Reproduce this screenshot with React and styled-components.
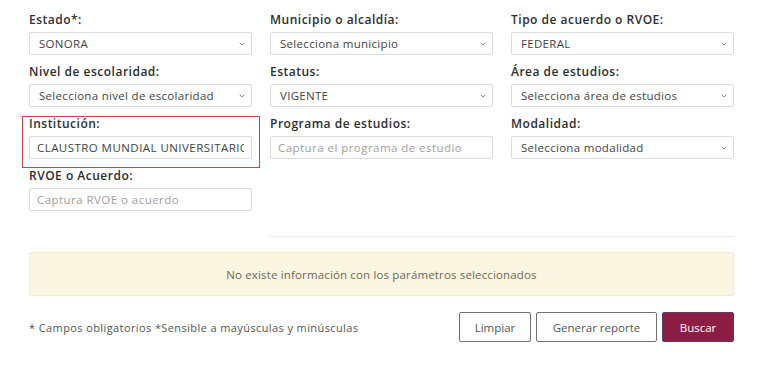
import React from 'react'
import styled, { createGlobalStyle } from 'styled-components'
import { ChevronDown } from 'lucide-react'

const GlobalStyle = createGlobalStyle`
  html, body {
    margin: 0;
    background: #fff;
    font-family: "Open Sans", "Liberation Sans", sans-serif;
  }
`

const Page = styled.div`
  width: 705px;
  padding: 12px 0 0 29px;
`

const Grid = styled.div`
  display: grid;
  grid-template-columns: repeat(3, 223px);
  column-gap: 18px;
`

const Field = styled.div`
  position: relative;
  display: flex;
  flex-direction: column;
  gap: 4px;
  padding-bottom: 9px;

  ${p => p.$highlight && `
    &::before {
      content: '';
      position: absolute;
      left: -7px;
      right: -8px;
      top: 0;
      bottom: 0;
      border: 1.5px solid #c4444a;
      pointer-events: none;
    }
  `}
`

const Label = styled.label`
  height: 16px;
  line-height: 16px;
  font-size: 12px;
  font-weight: 600;
  letter-spacing: 0.5px;
  color: #2e2e2e;
`

const controlBase = `
  box-sizing: border-box;
  width: 100%;
  height: 23px;
  border: 1px solid #dcdcdc;
  border-radius: 2px;
  background: #fff;
  font-family: "Open Sans", "Liberation Sans", sans-serif;
  font-size: 11.5px;
  letter-spacing: 0.3px;
  color: #444;
  outline: none;
`

const SelectWrap = styled.div`
  position: relative;
  display: flex;

  svg {
    position: absolute;
    right: 6px;
    top: 8px;
    color: #8a8a8a;
    pointer-events: none;
  }
`

const SelectBox = styled.select`
  ${controlBase}
  appearance: none;
  padding: 0 18px 0 9px;
`

const Input = styled.input`
  ${controlBase}
  padding: 0 7px;
  letter-spacing: 0.45px;
  &::placeholder {
    color: #a0a0a0;
  }
`

const Divider = styled.hr`
  margin: 16px 0 0 241px;
  border: none;
  border-top: 1px solid #ececec;
`

const Alert = styled.div`
  margin-top: 15px;
  height: 44px;
  box-sizing: border-box;
  display: flex;
  align-items: center;
  justify-content: center;
  background: #fbf6e1;
  border: 1px solid #f2ebcc;
  border-radius: 2px;
  color: #6f6655;
  font-size: 11.5px;
  letter-spacing: 0.15px;
`

const Footer = styled.div`
  display: flex;
  align-items: center;
  margin-top: 16px;
`

const Note = styled.span`
  flex: 1;
  font-size: 11px;
  letter-spacing: 0.4px;
  color: #555;
`

const Buttons = styled.div`
  display: flex;
  gap: 5px;
`

const Button = styled.button`
  height: 30px;
  width: ${p => p.$w}px;
  box-sizing: border-box;
  border-radius: 2px;
  font-family: "Open Sans", "Liberation Sans", sans-serif;
  font-size: 11.5px;
  border: 1px solid ${p => (p.$primary ? '#5b3a66' : '#707070')};
  background: ${p => (p.$primary ? '#8d1d42' : '#fff')};
  color: ${p => (p.$primary ? '#fff' : '#555')};
`

function Select({ value }) {
  return (
    <SelectWrap>
      <SelectBox defaultValue={value}>
        <option>{value}</option>
      </SelectBox>
      <ChevronDown size={8} strokeWidth={3} />
    </SelectWrap>
  )
}

export default function App() {
  return (
    <Page>
      <GlobalStyle />
      <Grid>
        <Field>
          <Label>Estado*:</Label>
          <Select value="SONORA" />
        </Field>
        <Field>
          <Label>Municipio o alcaldía:</Label>
          <Select value="Selecciona municipio" />
        </Field>
        <Field>
          <Label>Tipo de acuerdo o RVOE:</Label>
          <Select value="FEDERAL" />
        </Field>

        <Field>
          <Label>Nivel de escolaridad:</Label>
          <Select value="Selecciona nivel de escolaridad" />
        </Field>
        <Field>
          <Label>Estatus:</Label>
          <Select value="VIGENTE" />
        </Field>
        <Field>
          <Label>Área de estudios:</Label>
          <Select value="Selecciona área de estudios" />
        </Field>

        <Field $highlight>
          <Label>Institución:</Label>
          <Input defaultValue="CLAUSTRO MUNDIAL UNIVERSITARIO" />
        </Field>
        <Field>
          <Label>Programa de estudios:</Label>
          <Input placeholder="Captura el programa de estudio" />
        </Field>
        <Field>
          <Label>Modalidad:</Label>
          <Select value="Selecciona modalidad" />
        </Field>

        <Field>
          <Label>RVOE o Acuerdo:</Label>
          <Input placeholder="Captura RVOE o acuerdo" />
        </Field>
      </Grid>

      <Divider />

      <Alert>No existe información con los parámetros seleccionados</Alert>

      <Footer>
        <Note>* Campos obligatorios *Sensible a mayúsculas y minúsculas</Note>
        <Buttons>
          <Button $w={72}>Limpiar</Button>
          <Button $w={121}>Generar reporte</Button>
          <Button $w={72} $primary>Buscar</Button>
        </Buttons>
      </Footer>
    </Page>
  )
}
